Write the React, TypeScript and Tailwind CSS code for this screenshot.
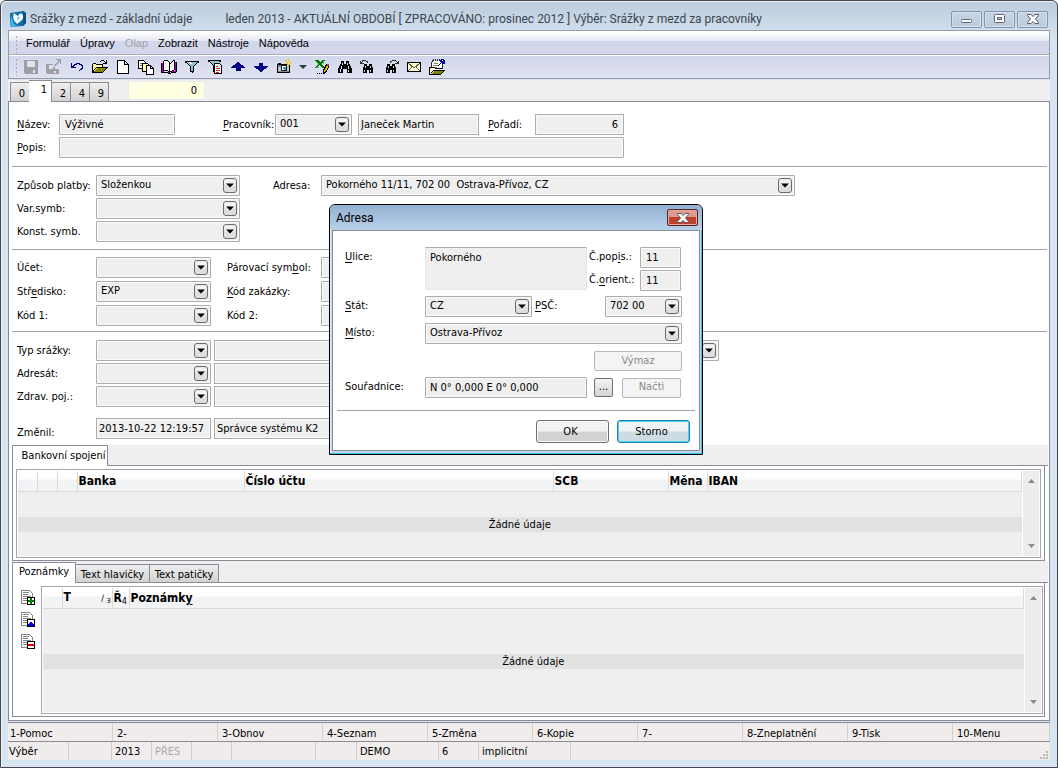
import { useState } from 'react'
import type { ReactNode } from 'react'
import clsx from 'clsx'

interface FieldProps {
  id: string
  label: string
  value?: string
  className?: string
}

function Field({ id, label, value = '', className }: FieldProps) {
  return (
    <input
      id={id}
      aria-label={label}
      readOnly
      defaultValue={value}
      className={clsx(
        'h-[21px] shrink-0 border border-[#acacac] bg-[#efefef] px-[5px] outline-none shadow-[inset_0_0_0_1px_#fafafa]',
        className,
      )}
    />
  )
}

function Combo({ id, label, value = '', className }: FieldProps) {
  return (
    <div className={clsx('relative h-[21px] shrink-0', className)}>
      <select
        id={id}
        aria-label={label}
        defaultValue={value}
        className="block h-full w-full appearance-none rounded-[1px] border border-[#acacac] bg-[#efefef] pl-[4px] outline-none shadow-[inset_0_0_0_1px_#fafafa]"
      >
        <option value={value}>{value}</option>
      </select>
      <svg
        className="pointer-events-none absolute top-[3px] right-[3px]"
        width="14"
        height="15"
        viewBox="0 0 14 15"
      >
        <rect x="0.5" y="0.5" width="13" height="14" rx="2.5" fill="#dedede" stroke="#6c6c6c" />
        <rect x="1.5" y="1.5" width="11" height="6" rx="1" fill="#f3f3f3" />
        <path d="M3 5.5h8L7 9.5z" fill="#000" />
      </svg>
    </div>
  )
}

// "&" marks the letter that gets the shortcut underline
function Mnemonic({ text }: { text: string }) {
  const at = text.indexOf('&')
  if (at < 0) return <>{text}</>
  return (
    <>
      {text.slice(0, at)}
      <u className="underline-offset-2">{text[at + 1]}</u>
      {text.slice(at + 2)}
    </>
  )
}

function Label({ htmlFor, text, className }: { htmlFor: string; text: string; className?: string }) {
  return (
    <label htmlFor={htmlFor} className={clsx('shrink-0 pt-[2px] whitespace-pre', className)}>
      <Mnemonic text={text} />
    </label>
  )
}

function Icon({ children }: { children: ReactNode }) {
  return (
    <svg width="16" height="16" viewBox="0 0 16 16" shapeRendering="crispEdges">
      {children}
    </svg>
  )
}

function Binoculars({ small }: { small?: boolean }) {
  return small ? (
    <>
      <path d="M4 5h3v2h2V5h3v3h1v6H9v-3H7v3H3V8h1z" fill="#000" />
      <path d="M5 7h1v2H5zM10 7h1v2h-1zM4 11h1v2H4zM10 11h1v2h-1z" fill="#c5cbe0" />
    </>
  ) : (
    <>
      <path d="M4 2h3v3h2V2h3v3h1v2h1v2h1v5h-5v-4H6v4H1V9h1V7h1V5h1z" fill="#000" />
      <path d="M5 4h1v2H5zM4 7h1v3H4zM3 10h1v3H3zM10 4h1v2h-1zM11 7h1v3h-1zM11 11h1v2h-1z" fill="#dfe3f1" />
    </>
  )
}

const toolIcons: { name: string; icon: ReactNode; disabled?: boolean }[] = [
  {
    name: 'Uložit',
    disabled: true,
    icon: (
      <>
        <path d="M1 1h14v14H2l-1-1z" fill="#a0a0a4" />
        <path d="M4 2h8v6H4zM10 11h2v3h-2z" fill="#dde1f0" />
      </>
    ),
  },
  {
    name: 'Uložit a zavřít',
    disabled: true,
    icon: (
      <>
        <path d="M0 5h7v3h2v2h4v5H1l-1-1z" fill="#a0a0a4" />
        <path d="M3 6h4v4H3zM8 12h2v2H8z" fill="#dde1f0" />
        <path d="M10 0h5v5h-1V3h-1v1h-1v1h-1v1h-1v1H8V6h1V5h1V4h1V3h1V1h-2z" fill="#a0a0a4" />
      </>
    ),
  },
  {
    name: 'Zpět',
    icon: (
      <path
        d="M2 4h1v3h1V6h1V5h2V4h4v1h2v1h1v4h-1v1h-2v1h-1v-1h1v-1h1V9h1V7h-1V6h-2V5H8v1H6v1H5v1h2v1H2z"
        fill="#000084"
      />
    ),
  },
  {
    name: 'Otevřít',
    icon: (
      <>
        <path d="M1 5h4v1h5v3H5l-4 4z" fill="#ffff9c" />
        <path d="M5 9h10l-4 4H1z" fill="#848400" />
        <path d="M1 4h3v1H1zM4 5h7v1H4zM0 5h1v9H0zM10 6h1v2h-1zM4 8h12v1H4zM3 9h1v1H3zM2 10h1v1H2zM1 11h1v2H1zM0 13h11v1H0zM14 9h1v1h-1zM13 10h1v1h-1zM12 11h1v1h-1zM11 12h1v1h-1z" fill="#000" />
        <path d="M9 1h3v1H9zM8 2h1v1H8zM12 2h1v1h-1zM14 1h1v4h-4V4h2V3h1z" fill="#000" />
      </>
    ),
  },
  {
    name: 'Nový',
    icon: <path d="M2.500 1.500h7l4 4v9h-11zM9.500 1.500v4h4" fill="#fff" stroke="#000" />,
  },
  {
    name: 'Kopie',
    icon: (
      <g stroke="#000">
        <path d="M0.500 1.500h5l2 2v6h-7z" fill="#fff" />
        <path d="M4.500 4.500h5l2 2v6h-7z" fill="#ffffb0" />
        <path d="M8.500 6.500h4l3 3v6h-7zM12.500 6.500v3h3" fill="#fff" />
        <path d="M2 4h2M2 6h2" stroke="#848400" />
      </g>
    ),
  },
  {
    name: 'Kniha',
    icon: (
      <>
        <path d="M1 4h2v9h5l6-1V3h1v10H9v1H7v-1H1z" fill="#b000b0" />
        <path d="M3 2h4l1 1v10l-1-1H3zM9 5l3-3h1v9l-4 2z" fill="#fff" />
        <path d="M3 1h4v1H3zM2 2h1v10H2zM7 2h1v1H7zM8 3h1v11H8zM3 11h4v1H3zM7 12h1v1H7zM9 4h1v1H9zM10 3h1v1h-1zM11 2h1v1h-1zM12 1h2v10h-1V2h-1zM11 11h2v1h-2zM9 12h2v1H9zM0 4h1v10H0zM1 13h6v1H1zM7 14h3v1H7zM10 13h5v1h-5zM15 3h1v10h-1z" fill="#000" />
        <path d="M4 4h1v1H4zM5 6h1v1H5zM4 8h1v1H4zM10 7h1v1h-1zM11 5h1v1h-1z" fill="#c6c6c6" />
      </>
    ),
  },
  {
    name: 'Filtr',
    icon: (
      <>
        <path d="M2 3h12L9 8v5l-2-1V8z" fill="#8fc4cc" />
        <path d="M5 3h2v1h1v1H6V4H5z" fill="#fff" />
        <path d="M1 2h14v1H1zM1 3h2v1H1zM13 3h2v1h-2zM3 4h1v1H3zM12 4h1v1h-1zM4 5h1v1H4zM11 5h1v1h-1zM5 6h1v1H5zM10 6h1v1h-1zM6 7h1v6H6zM9 7h1v6H9zM7 12h2v2H8v-1H7z" fill="#000" />
      </>
    ),
  },
  {
    name: 'Filtr podle seznamu',
    icon: (
      <>
        <path d="M2 2h10L8 6v7l-2-1V7z" fill="#8fc4cc" />
        <path d="M1 1h13v1H1zM1 2h2v1H1zM12 2h2v1h-2zM3 3h1v1H3zM4 4h1v1H4zM5 5h1v1H5zM6 6h1v7H6z" fill="#000" />
        <path d="M7.500 4.500h5l2 2v8h-7z" fill="#fff" stroke="#000" />
        <path d="M9 7h2v1H9zM9 9h4v1H9zM9 11h4v1H9zM9 13h3v1H9z" fill="#d02020" />
      </>
    ),
  },
  {
    name: 'Předchozí',
    icon: <path d="M7 3h2v1h1v1h1v1h2v1h1v1h1v1h-4v3H6V9H1V8h1V7h1V6h2V5h1V4h1z" fill="#000084" />,
  },
  {
    name: 'Další',
    icon: <path d="M6 4h4v3h5v1h-1v1h-1v1h-2v1h-1v1H9v1H7v-1H6v-1H5v-1H3V9H2V8H1V7h5z" fill="#000084" />,
  },
  {
    name: 'Fotoaparát',
    icon: (
      <>
        <rect x="1.500" y="5.500" width="12" height="8" fill="#c6c6c6" stroke="#000" />
        <path d="M2 4h3v1H2z" fill="#000" />
        <path d="M2 6h3v2H2zM2 12h11v1H2z" fill="#84848c" />
        <rect x="5.500" y="6.500" width="5" height="5" fill="#fff" stroke="#202020" />
        <path d="M7 8h3v3H8v-1H7z" fill="#29a5bd" />
        <path d="M11 3h3v3h-3zM9 1h2v1H9zM12 0h1v2h-1zM14 1h1v1h-1zM9 4h1v1H9zM15 4h1v1h-1zM14 7h1v1h-1zM10 2h1v1h-1z" fill="#e7c600" />
        <path d="M12 4h1v1h-1z" fill="#fff" />
      </>
    ),
  },
  {
    name: 'Export do Excelu',
    icon: (
      <>
        <path d="M0 1h4l2 2 2-2h3L7 5l4 4H8L5 6 3 9H0l4-4z" fill="#008000" />
        <path d="M9 2h1v3H9zM2 8h3v1H2z" fill="#63b563" />
        <path d="M3 14h1v1H3zM5 14h1v1H5zM7 14h1v1H7z" fill="#000" />
        <path d="M12.500 5.500l2 1v2l-3 5-2 1v-3z" fill="#e7c600" stroke="#000" />
        <path d="M13 5h2v2h-2z" fill="#c63131" />
      </>
    ),
  },
  { name: 'Najít', icon: <Binoculars /> },
  {
    name: 'Najít předchozí',
    icon: (
      <>
        <Binoculars small />
        <path d="M0 2h1v1h1V1h4v1h2v2H7V3H6V2H3v1H2v1h2v1H0z" fill="#303030" />
      </>
    ),
  },
  {
    name: 'Najít další',
    icon: (
      <>
        <Binoculars small />
        <path d="M7 2h2V1h4v1h1v1h1V2h1v3h-4V4h2V3h-1V2H9v1H8v1H7z" fill="#303030" />
      </>
    ),
  },
  {
    name: 'Pošta',
    icon: (
      <>
        <path d="M1.500 3.500h13v9h-13z" fill="#ffffce" stroke="#000" />
        <path d="M2 4l6 5 6-5M2 12l4-4M14 12l-4-4" fill="none" stroke="#5a5a4a" />
      </>
    ),
  },
  {
    name: 'Poznámky',
    icon: (
      <>
        <path d="M3 2h10v7H3z" fill="#fff" />
        <path d="M4 0h1v2H4zM6 0h1v2H6zM8 0h1v2H8zM10 0h1v2h-1zM3 1h1v2H3zM2 3h1v5H2zM13 5h1v5h-1z" fill="#303030" />
        <path d="M5 4h4v1H5zM4 6h5v1H4zM4 8h4v1H4z" fill="#848484" />
        <path d="M1 9h5l1 1h4v2H5l-3 2H1z" fill="#ffffce" />
        <path d="M0 8h6v1H0zM0 9h1v6H0zM6 9h1v1H6zM7 9h6v1H7zM4 11h12v1H4zM3 12h1v1H3zM2 13h1v1H2zM0 15h12v1H0zM15 12h-1v1h-1v1h-1v1h1v-1h1v-1h1z" fill="#000" />
        <path d="M5 12h9l-3 3H2z" fill="#848400" />
        <path d="M12 0h3v1h1v4h-3V4h-1V3h-1V1h1z" fill="#000094" />
        <path d="M13 1h1v1h-1z" fill="#fff" />
        <path d="M10 5h1v1h-1zM9 6h1v1H9zM11 4h1v1h-1z" fill="#000" />
      </>
    ),
  },
]

function Toolbar() {
  return (
    <div
      role="toolbar"
      className="flex h-[23px] items-center gap-[7px] border-t border-white bg-linear-to-b from-[#d3d7ec] to-[#dee2f2] pl-[5px]"
    >
      <Grip className="mr-[-3px]" />
      {toolIcons.map((t) => (
        <div key={t.name} className="flex items-center gap-[7px]">
          <button aria-label={t.name} disabled={t.disabled} className="size-4">
            <Icon>{t.icon}</Icon>
          </button>
          {t.name === 'Fotoaparát' && (
            <button aria-label="Další volby" className="w-2">
              <svg width="8" height="4" viewBox="0 0 8 4">
                <path d="M0 0h8L4 4z" fill="#303838" />
              </svg>
            </button>
          )}
        </div>
      ))}
    </div>
  )
}

function Grip({ className }: { className?: string }) {
  return (
    <span
      className={clsx(
        'h-[18px] w-[5px] shrink-0 bg-[radial-gradient(circle,#a4a8ba_1px,transparent_1px)] bg-[length:5px_4px]',
        className,
      )}
    />
  )
}

const menu = ['Formulář', 'Úpravy', 'Olap', 'Zobrazit', 'Nástroje', 'Nápověda']

function MenuBar() {
  return (
    <nav className="flex h-[23px] items-center bg-linear-to-b from-white from-5% via-[#e4e7f3] via-45% to-[#d3d7ec] to-45% pt-[2px] pl-[5px] font-['Liberation_Sans',sans-serif]">
      <Grip className="mr-[7px]" />
      <div className="flex gap-[10px] text-[11px]">
        {menu.map((m) => (
          <button key={m} disabled={m === 'Olap'} className="text-black disabled:text-[#a3a3a8]">
            {m}
          </button>
        ))}
      </div>
    </nav>
  )
}

function TitleBar() {
  const btn =
    'flex h-[17px] w-[31px] items-center justify-center rounded-[2px] border border-[#8195b3] bg-linear-to-b from-[#c6d4e3] to-[#bccbdd] shadow-[inset_0_0_0_1px_#d7e1ec]'
  return (
    <header className="flex h-[29px] shrink-0 items-center pt-[7px] pr-[9px] pl-[8px] font-['Roboto',sans-serif] text-[12px] text-[#3c4650]">
      <svg width="18" height="18" viewBox="0 0 18 18" className="mr-[3px]">
        <path d="M1 3L14 1l3 2v10l-3 3-12 1-1-2z" fill="#1670ad" />
        <path d="M14 1l3 2v10l-3 3z" fill="#0b4f88" />
        <path d="M2 6l3 8 4 2-7 1-1-2z" fill="#43b2e0" />
        <path d="M5 3c1 1 2 2 4 3 1-2 3-3 4-2 2 2 1 5 0 6l-5 4c-3-3-5-6-3-11z" fill="#f2fbff" />
        <path d="M8 8l2-2 1 2-3 3z" fill="#8fcdea" />
      </svg>
      <h1 className="whitespace-nowrap">Srážky z mezd - základní údaje</h1>
      <span className="ml-[33px] whitespace-nowrap">
        leden 2013 - AKTUÁLNÍ OBDOBÍ [ ZPRACOVÁNO: prosinec 2012 ] Výběr: Srážky z mezd za pracovníky
      </span>
      <div className="ml-auto flex gap-[2px]">
        <button aria-label="Minimalizovat" className={btn}>
          <svg width="11" height="10" viewBox="0 0 11 10">
            <rect x="0.500" y="5.500" width="10" height="3" rx="1" fill="#fff" stroke="#5d6676" />
          </svg>
        </button>
        <button aria-label="Maximalizovat" className={btn}>
          <svg width="11" height="10" viewBox="0 0 11 10">
            <rect x="0.500" y="0.500" width="10" height="8" rx="1" fill="#fff" stroke="#5d6676" />
            <rect x="3.500" y="3.500" width="4" height="2" fill="#c3d0e0" stroke="#5d6676" />
          </svg>
        </button>
        <button aria-label="Zavřít" className={btn}>
          <CloseGlyph />
        </button>
      </div>
    </header>
  )
}

function CloseGlyph() {
  return (
    <svg width="12" height="10" viewBox="0 0 12 10">
      <path
        d="M0.500 0.500h3.500L6 2.500 8 0.500h3.500v1L8.500 5l3 3.500v1H8L6 7.500l-2 2H0.500v-1l3-3.500-3-3.500z"
        fill="#fff"
        stroke="#535666"
      />
    </svg>
  )
}

function PageTabs() {
  const [active, setActive] = useState('1')
  return (
    <div className="flex h-[22px] items-end border-b border-[#8b8b96] bg-[#efefef] pl-[2px]">
      <div role="tablist" className="flex items-end">
        {['0', '1', '2', '4', '9'].map((t) => (
          <button
            key={t}
            role="tab"
            aria-selected={t === active}
            onClick={() => setActive(t)}
            className={clsx(
              'border-t border-r border-[#8b8b96]',
              t === active
                ? '-mb-px h-[22px] w-[23px] bg-white pb-[2px] pl-[8px]'
                : 'h-[19px] w-[19px] border-l-[#8b8b96] bg-linear-to-b from-[#efefef] to-[#d2d2d2] pt-[3px] pl-[4px] first:border-l nth-1:border-r-0',
            )}
          >
            {t}
          </button>
        ))}
      </div>
      <input
        aria-label="Číslo záznamu"
        readOnly
        defaultValue="0"
        className="mb-[1px] ml-[19px] h-[19px] w-[77px] border border-[#e8ebf0] bg-[#ffffe1] px-[7px] text-right"
      />
    </div>
  )
}

function Rule({ className }: { className?: string }) {
  return <hr className={clsx('border-[#a3a3a3]', className)} />
}

const row = 'flex h-[21px] items-center'

function MainForm() {
  return (
    <form className="pt-[12px] pr-[2px] pl-[3px]">
      <div className="flex flex-col gap-[2px] pl-[5px]">
        <div className={row}>
          <Label htmlFor="nazev" text="&Název:" className="w-[42px]" />
          <Field id="nazev" label="Název" value="Výživné" className="w-[116px] rounded-[1px]" />
          <Label htmlFor="pracovnik" text="&Pracovník:" className="ml-[48px] w-[52px]" />
          <Combo id="pracovnik" label="Pracovník" value="001" className="w-[77px]" />
          <Field id="jmeno" label="Jméno pracovníka" value="Janeček Martin" className="ml-[6px] w-[121px] pl-[2px]" />
          <Label htmlFor="poradi" text="&Pořadí:" className="ml-[9px] w-[47px]" />
          <Field id="poradi" label="Pořadí" value="6" className="w-[89px] text-right" />
        </div>
        <div className={row}>
          <Label htmlFor="popis" text="&Popis:" className="w-[42px]" />
          <Field id="popis" label="Popis" className="w-[565px] rounded-[1px]" />
        </div>
      </div>
      <Rule className="mt-[8px]" />
      <div className="mt-[8px] flex flex-col gap-[2px] pl-[5px]">
        <div className={row}>
          <Label htmlFor="platba" text="Způsob platby:" className="w-[79px]" />
          <Combo id="platba" label="Způsob platby" value="Složenkou" className="w-[144px]" />
          <Label htmlFor="adresa" text="Adresa:" className="ml-[33px] w-[48px]" />
          <Combo
            id="adresa"
            label="Adresa"
            value={'Pokorného 11/11, 702 00\u00a0 Ostrava-Přívoz, CZ'}
            className="w-[474px]"
          />
        </div>
        <div className={row}>
          <Label htmlFor="varsymb" text="Var.symb:" className="w-[79px]" />
          <Combo id="varsymb" label="Variabilní symbol" className="w-[144px]" />
        </div>
        <div className={row}>
          <Label htmlFor="konst" text="Konst. symb." className="w-[79px]" />
          <Combo id="konst" label="Konstantní symbol" className="w-[144px]" />
        </div>
      </div>
      <Rule className="mt-[7px]" />
      <div className="mt-[7px] flex flex-col gap-[3px] pl-[5px]">
        {[
          { id: 'ucet', text: 'Účet:', value: '', other: 'Párovací sym&bol:' },
          { id: 'stredisko', text: 'Stř&edisko:', value: 'EXP', other: '&Kód zakázky:' },
          { id: 'kod1', text: 'Kód 1:', value: '', other: 'Kód 2:' },
        ].map((r) => (
          <div key={r.id} className={row}>
            <Label htmlFor={r.id} text={r.text} className="w-[79px]" />
            <Combo id={r.id} label={r.text.replace('&', '')} value={r.value} className="w-[115px]" />
            <Label htmlFor={`${r.id}-dalsi`} text={r.other} className="ml-[16px] w-[94px]" />
            <Combo id={`${r.id}-dalsi`} label={r.other.replace('&', '')} className="w-[144px]" />
          </div>
        ))}
      </div>
      <Rule className="mt-[5px]" />
      <div className="mt-[8px] flex flex-col gap-[2px] pl-[5px]">
        {[
          { id: 'typ', text: 'Typ srážky:' },
          { id: 'adresat', text: 'Adresát:' },
          { id: 'pojistovna', text: 'Zdrav. poj.:' },
        ].map((r) => (
          <div key={r.id} className={row}>
            <Label htmlFor={r.id} text={r.text} className="w-[79px]" />
            <Combo id={r.id} label={r.text} className="w-[115px]" />
            <Field id={`${r.id}-nazev`} label={`${r.text} název`} className="ml-[3px] w-[266px]" />
            {r.id === 'typ' && <Combo id="typ-druh" label="Druh" className="ml-[95px] w-[144px]" />}
          </div>
        ))}
      </div>
      <div className="mt-[11px] flex h-[21px] items-center pl-[5px]">
        <Label htmlFor="zmenil" text="Změnil:" className="mt-[8px] w-[79px]" />
        <Field id="zmenil" label="Změnil" value="2013-10-22 12:19:57" className="w-[115px] pr-0 pl-[2px]" />
        <Field id="zmenil-kdo" label="Změnil uživatel" value="Správce systému K2" className="ml-[3px] w-[266px] pl-[2px]" />
      </div>
    </form>
  )
}

interface Column {
  title: ReactNode
  width?: string
  name: string
}

function DataGrid({ columns, padding, className }: { columns: Column[]; padding: string; className?: string }) {
  return (
    <div className={clsx('flex flex-1 border border-[#a5a5ad] bg-white p-px', className)}>
      <div className="flex-1 bg-[#efefef]">
        <table className="w-full table-fixed border-collapse">
          <thead>
            <tr className="h-[20px] bg-linear-to-b from-white from-40% to-[#f1f3f5] to-45% text-left text-[12px]">
              {columns.map((c) => (
                <th
                  key={c.name}
                  aria-label={c.name}
                  className={clsx('border-r border-b border-[#dadada] p-0 pl-px font-bold leading-[18px] whitespace-nowrap', c.width)}
                >
                  {c.title}
                </th>
              ))}
            </tr>
          </thead>
          <tbody>
            <tr>
              <td colSpan={columns.length} className={clsx('p-0', padding)}>
                <div className="h-[15px] bg-[#e2e2e2] text-center leading-[15px]">Žádné údaje</div>
              </td>
            </tr>
          </tbody>
        </table>
      </div>
      <div className="flex w-[17px] flex-col justify-between border-l border-white bg-[#ededed] px-[5px] py-[8px]">
        <svg width="7" height="4" viewBox="0 0 7 4">
          <path d="M0 4h7L3.500 0z" fill="#8b8b8b" />
        </svg>
        <svg width="7" height="4" viewBox="0 0 7 4">
          <path d="M0 0h7L3.500 4z" fill="#8b8b8b" />
        </svg>
      </div>
    </div>
  )
}

function NoteIcon({ kind }: { kind: 'add' | 'edit' | 'delete' }) {
  return (
    <svg width="15" height="16" viewBox="0 0 15 16" shapeRendering="crispEdges">
      <path d="M0.500 0.500h8l3 3v10h-11z" fill="#fff" stroke="#848484" />
      <path d="M2 2.500h6M2 4.500h5M2 6.500h8M2 8.500h4M2 10.500h4" stroke="#848484" />
      <rect x="6.500" y="7.500" width="7" height="7" fill="#fff" stroke="#000" />
      {kind === 'add' && <path d="M9 8h2v2h2v2h-2v2H9v-2H7v-2h2z" fill="#008000" />}
      {kind === 'edit' && <path d="M9 10h2v1h1v1h1v2H7v-2h1v-1h1z" fill="#0000e0" />}
      {kind === 'delete' && <path d="M7 10h6v2H7z" fill="#f00000" />}
    </svg>
  )
}

function BankSection() {
  return (
    <section className="mr-px ml-[3px]">
      <div role="tablist" className="flex h-[21px] bg-[#efefef]">
        <button
          role="tab"
          aria-selected
          className="w-[96px] border-t border-r border-l border-[#8b8b96] bg-white pl-[7px] whitespace-nowrap"
        >
          Bankovní spojení
        </button>
        <div className="flex-1 border-b border-[#8b8b96]" />
      </div>
      <div className="mr-[3px] flex h-[95px] border-x border-b border-[#8b8b96] px-[3px] pt-[3px] pb-[2px]">
        <DataGrid
          padding="pt-[25px]"
          columns={[
            { name: 'Stav', title: '', width: 'w-[19px]' },
            { name: 'Typ', title: '', width: 'w-[20px]' },
            { name: 'Příznak', title: '', width: 'w-[20px]' },
            { name: 'Banka', title: 'Banka', width: 'w-[167px]' },
            { name: 'Číslo účtu', title: 'Číslo účtu', width: 'w-[309px]' },
            { name: 'SCB', title: 'SCB', width: 'w-[115px]' },
            { name: 'Měna', title: 'Měna', width: 'w-[39px]' },
            { name: 'IBAN', title: 'IBAN' },
          ]}
        />
      </div>
    </section>
  )
}

function NotesSection() {
  const [active, setActive] = useState('Poznámky')
  return (
    <section className="mr-px ml-[3px]">
      <div role="tablist" className="flex h-[22px] items-end bg-[#efefef]">
        {['Poznámky', 'Text hlavičky', 'Text patičky'].map((t) => (
          <button
            key={t}
            role="tab"
            aria-selected={t === active}
            onClick={() => setActive(t)}
            className={clsx(
              'border-t border-r border-[#8b8b96] px-[4px] whitespace-nowrap first:w-[64px] nth-2:w-[74px] nth-3:w-[69px]',
              t === active
                ? 'h-[21px] border-l bg-white pb-[2px]'
                : 'h-[19px] border-b bg-linear-to-b from-[#efefef] to-[#d2d2d2] pt-[2px]',
            )}
          >
            {t}
          </button>
        ))}
        <div className="flex-1 border-b border-[#8b8b96]" />
      </div>
      <div className="mr-[3px] flex h-[134px] border-x border-b border-[#8b8b96] pt-[3px] pr-[1px] pb-[2px]">
        <div className="flex w-[28px] flex-col gap-[6px] pt-[4px] pl-[8px]">
          <button aria-label="Přidat poznámku"><NoteIcon kind="add" /></button>
          <button aria-label="Upravit poznámku"><NoteIcon kind="edit" /></button>
          <button aria-label="Smazat poznámku"><NoteIcon kind="delete" /></button>
        </div>
        <DataGrid
          padding="pt-[45px]"
          columns={[
            { name: 'Stav', title: '', width: 'w-[19px]' },
            {
              name: 'T',
              width: 'w-[50px]',
              title: (
                <span className="flex items-baseline justify-between pr-[1px]">
                  T
                  <span className="text-[9px] font-normal">∕ <sub>3</sub></span>
                </span>
              ),
            },
            { name: 'Ř', title: <>Ř<sub className="text-[9px] font-normal">4</sub></>, width: 'w-[17px]' },
            { name: 'Poznámky', title: <Mnemonic text="Poznámk&y" /> },
          ]}
        />
      </div>
    </section>
  )
}

const keys = ['1-Pomoc', '2-', '3-Obnov', '4-Seznam', '5-Změna', '6-Kopie', '7-', '8-Zneplatnění', '9-Tisk', '10-Menu']

const status = [
  { text: 'Výběr', width: 'w-[61px]' },
  { text: '', width: 'w-[43px]' },
  { text: '2013', width: 'w-[40px]' },
  { text: 'PŘES', width: 'w-[40px]' },
  { text: '', width: 'w-[40px]' },
  { text: '', width: 'w-[84px]' },
  { text: '', width: 'w-[41px]' },
  { text: 'DEMO', width: 'w-[82px]' },
  { text: '6', width: 'w-[40px]' },
  { text: 'implicitní', width: 'w-[92px]' },
]

function StatusBars() {
  return (
    <footer className="bg-[#f0ecec]">
      <div className="flex h-[19px] border-t border-[#8b8b96]">
        {keys.map((k) => (
          <button
            key={k}
            className="w-[105px] border-r border-[#d0d0d0] pt-[3px] pl-[4px] text-left first:pl-[2px] last:flex-1"
          >
            {k}
          </button>
        ))}
      </div>
      <div className="flex h-[19px] border-t border-[#8b8b96]">
        {status.map((s, i) => (
          <div
            key={i}
            className={clsx(
              'flex items-center border-r border-[#d0d0d0] pt-[3px] pl-[3px] first:pl-[1px]',
              s.width,
              s.text === 'PŘES' && 'text-[#a8a8a8]',
            )}
          >
            {s.text}
          </div>
        ))}
        <svg width="9" height="9" viewBox="0 0 9 9" className="mt-auto mr-[2px] mb-[1px] ml-auto">
          <path d="M7 1h2v2H7zM4 4h2v2H4zM7 4h2v2H7zM1 7h2v2H1zM4 7h2v2H4zM7 7h2v2H7z" fill="#b9b9b9" />
        </svg>
      </div>
    </footer>
  )
}

function AddressDialog() {
  const smallBtn =
    'rounded-[2px] border border-[#b5b8bb] bg-[#f4f4f4] text-[#8a8a8a] h-[20px]'
  return (
    <div
      role="dialog"
      aria-label="Adresa"
      className="absolute top-[203px] left-[328px] w-[374px] rounded-t-[6px] border border-black bg-[#c0d5ec] shadow-[inset_-1px_-1px_0_#35c4e8,inset_1px_1px_0_#e6f0fa]"
    >
      <div className="flex h-[25px] items-center justify-between rounded-t-[5px] bg-linear-to-b from-[#94b1d0] to-[#b8d1ea] pr-[4px] pl-[6px] font-['Roboto',sans-serif] text-[12px] text-black">
        <h2>Adresa</h2>
        <button
          aria-label="Zavřít"
          className="flex h-[17px] w-[31px] items-center justify-center rounded-[2px] border border-[#5c1f26] bg-linear-to-b from-[#dc9a90] from-45% to-[#c0402c] to-50% shadow-[inset_0_0_0_1px_#e3aaa2]"
        >
          <CloseGlyph />
        </button>
      </div>
      <div className="mx-[2px] mb-[3px] border border-[#8b8b96] bg-white px-[4px] pb-[7px]">
        <div className="flex flex-col pt-[16px] pl-[8px]">
          <div className="flex items-start">
            <Label htmlFor="ulice" text="&Ulice:" className="w-[80px]" />
            <textarea
              id="ulice"
              readOnly
              defaultValue="Pokorného"
              className="mr-[2px] h-[43px] w-[162px] resize-none border border-[#e3e6ec] border-t-[#acacac] bg-[#efefef] px-[4px] pt-[2px] outline-none"
            />
            <div className="flex flex-col gap-[2px]">
              <div className={row}>
                <Label htmlFor="popisne" text="Č.pop&is.:" className="w-[51px] pb-[2px]" />
                <Field id="popisne" label="Číslo popisné" value="11" className="w-[41px] rounded-[1px]" />
              </div>
              <div className={row}>
                <Label htmlFor="orientacni" text="Č.&orient.:" className="w-[51px] pb-[2px]" />
                <Field id="orientacni" label="Číslo orientační" value="11" className="w-[41px] rounded-[1px]" />
              </div>
            </div>
          </div>
          <div className="mt-[5px] flex h-[21px] items-center">
            <Label htmlFor="stat" text="&Stát:" className="w-[80px] pb-[2px]" />
            <Combo id="stat" label="Stát" value="CZ" className="w-[107px]" />
            <Label htmlFor="psc" text="&PSČ:" className="ml-[3px] w-[70px] pb-[2px]" />
            <Combo id="psc" label="PSČ" value="702 00" className="w-[77px]" />
          </div>
          <div className="mt-[6px] flex h-[21px] items-center">
            <Label htmlFor="misto" text="&Místo:" className="w-[80px] pb-[2px]" />
            <Combo id="misto" label="Místo" value="Ostrava-Přívoz" className="w-[257px]" />
          </div>
          <button disabled className={clsx(smallBtn, 'mt-[7px] mr-[13px] w-[88px] self-end')}>
            Výmaz
          </button>
          <div className="mt-[6px] flex h-[21px] items-center">
            <Label htmlFor="souradnice" text="Souřadnice:" className="w-[80px] pb-[2px]" />
            <Field id="souradnice" label="Souřadnice" value="N 0° 0,000 E 0° 0,000" className="w-[162px] rounded-[1px] pl-[4px]" />
            <button
              aria-label="Vybrat souřadnice"
              className="ml-[7px] h-[19px] w-[19px] rounded-[2px] border border-[#707070] bg-linear-to-b from-[#f4f4f4] to-[#d4d4d4]"
            >
              ...
            </button>
            <button disabled className={clsx(smallBtn, 'ml-[9px] w-[59px]')}>
              Načti
            </button>
          </div>
        </div>
        <Rule className="mt-[12px]" />
        <div className="mt-[9px] mr-[5px] flex justify-end gap-[8px]">
          <button className="h-[23px] w-[73px] rounded-[3px] border border-[#707070] bg-linear-to-b from-[#f2f2f2] from-45% to-[#d2d2d2] to-55% pt-px pr-[4px] shadow-[inset_0_0_0_1px_#fafafa]">
            OK
          </button>
          <button className="h-[23px] w-[73px] rounded-[3px] border border-[#2c7fa8] bg-linear-to-b from-[#eef3f5] from-45% to-[#cddbe2] to-55% pt-px pr-[4px] shadow-[inset_0_0_0_1px_#45d2f5]">
            Storno
          </button>
        </div>
      </div>
    </div>
  )
}

export default function App() {
  return (
    <div className="relative flex min-h-screen flex-col rounded-t-[6px] border border-[#45454b] bg-linear-to-b from-[#bccbdc] to-[#d7e4f2] to-[40px] font-['DejaVu_Sans_Condensed','Noto_Sans',sans-serif] text-[11px] text-black shadow-[inset_1px_1px_0_#eef4fa]">
      <TitleBar />
      <main className="mx-[7px] mb-[7px] flex flex-1 flex-col">
        <div className="mb-px border border-[#9b9ba3] bg-white">
          <MenuBar />
          <div className="border-t border-[#acacb4]">
            <Toolbar />
          </div>
        </div>
        <PageTabs />
        <div className="mb-[1px] flex flex-1 flex-col border-x border-b border-[#8b8b96] bg-white">
          <MainForm />
          <div className="mt-[6px]">
            <BankSection />
            <NotesSection />
          </div>
        </div>
        <StatusBars />
      </main>
      <AddressDialog />
    </div>
  )
}
